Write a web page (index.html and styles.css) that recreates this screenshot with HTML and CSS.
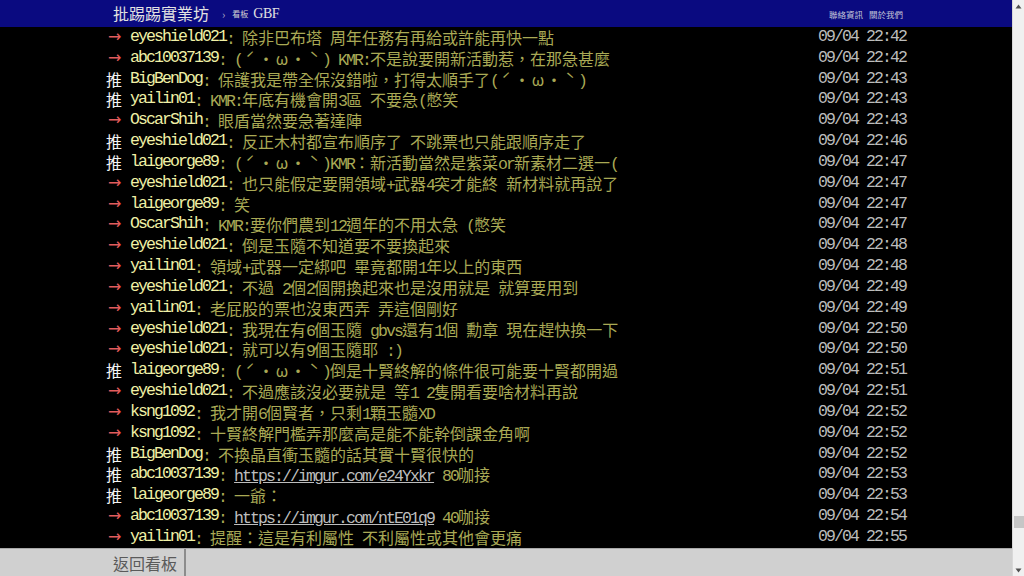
FILE: index.html
```html
<!DOCTYPE html>
<html lang="zh-Hant">
<head>
<meta charset="utf-8">
<title>GBF - 批踢踢實業坊</title>
<link rel="stylesheet" href="styles.css">
</head>
<body>
<div class="page">
  <header class="topbar">
    <div class="topbar-inner">
      <span class="brand">批踢踢實業坊</span>
      <span class="crumb-sep">›</span>
      <span class="crumb-label">看板</span>
      <span class="board">GBF</span>
      <nav class="nav-links"><span>聯絡資訊</span><span>關於我們</span></nav>
    </div>
  </header>
  <main class="comments">
    <div class="comments-inner">
      <div class="push"><span class="tag arrow">→</span><span class="uid">eyeshield021</span><span class="txt"><span class="en">: </span>除非巴布塔<span class="en"> </span>周年任務有再給或許能再快一點</span><span class="time">09/04 22:42</span></div>
      <div class="push"><span class="tag arrow">→</span><span class="uid">abc10037139</span><span class="txt"><span class="en">: (</span><span class="fw">ˊ</span><span class="fw">・</span><span class="fw">ω</span><span class="fw">・</span><span class="fw">ˋ</span><span class="en">) KMR:</span>不是說要開新活動惹，在那急甚麼</span><span class="time">09/04 22:42</span></div>
      <div class="push"><span class="tag good">推</span><span class="uid">BigBenDog</span><span class="txt"><span class="en">: </span>保護我是帶全保沒錯啦，打得太順手了<span class="en">(</span><span class="fw">ˊ</span><span class="fw">・</span><span class="fw">ω</span><span class="fw">・</span><span class="fw">ˋ</span><span class="en">)</span></span><span class="time">09/04 22:43</span></div>
      <div class="push"><span class="tag good">推</span><span class="uid">yailin01</span><span class="txt"><span class="en">: KMR:</span>年底有機會開<span class="en">3</span>區<span class="en"> </span>不要急<span class="en">(</span>憋笑</span><span class="time">09/04 22:43</span></div>
      <div class="push"><span class="tag arrow">→</span><span class="uid">OscarShih</span><span class="txt"><span class="en">: </span>眼盾當然要急著達陣</span><span class="time">09/04 22:43</span></div>
      <div class="push"><span class="tag good">推</span><span class="uid">eyeshield021</span><span class="txt"><span class="en">: </span>反正木村都宣布順序了<span class="en"> </span>不跳票也只能跟順序走了</span><span class="time">09/04 22:46</span></div>
      <div class="push"><span class="tag good">推</span><span class="uid">laigeorge89</span><span class="txt"><span class="en">: (</span><span class="fw">ˊ</span><span class="fw">・</span><span class="fw">ω</span><span class="fw">・</span><span class="fw">ˋ</span><span class="en">)KMR</span>：新活動當然是紫菜<span class="en">or</span>新素材二選一<span class="en">(</span></span><span class="time">09/04 22:47</span></div>
      <div class="push"><span class="tag arrow">→</span><span class="uid">eyeshield021</span><span class="txt"><span class="en">: </span>也只能假定要開領域<span class="en">+</span>武器<span class="en">4</span>突才能終<span class="en"> </span>新材料就再說了</span><span class="time">09/04 22:47</span></div>
      <div class="push"><span class="tag arrow">→</span><span class="uid">laigeorge89</span><span class="txt"><span class="en">: </span>笑</span><span class="time">09/04 22:47</span></div>
      <div class="push"><span class="tag arrow">→</span><span class="uid">OscarShih</span><span class="txt"><span class="en">: KMR:</span>要你們農到<span class="en">12</span>週年的不用太急<span class="en"> (</span>憋笑</span><span class="time">09/04 22:47</span></div>
      <div class="push"><span class="tag arrow">→</span><span class="uid">eyeshield021</span><span class="txt"><span class="en">: </span>倒是玉隨不知道要不要換起來</span><span class="time">09/04 22:48</span></div>
      <div class="push"><span class="tag arrow">→</span><span class="uid">yailin01</span><span class="txt"><span class="en">: </span>領域<span class="en">+</span>武器一定綁吧<span class="en"> </span>畢竟都開<span class="en">1</span>年以上的東西</span><span class="time">09/04 22:48</span></div>
      <div class="push"><span class="tag arrow">→</span><span class="uid">eyeshield021</span><span class="txt"><span class="en">: </span>不過<span class="en"> 2</span>個<span class="en">2</span>個開換起來也是沒用就是<span class="en"> </span>就算要用到</span><span class="time">09/04 22:49</span></div>
      <div class="push"><span class="tag arrow">→</span><span class="uid">yailin01</span><span class="txt"><span class="en">: </span>老屁股的票也沒東西弄<span class="en"> </span>弄這個剛好</span><span class="time">09/04 22:49</span></div>
      <div class="push"><span class="tag arrow">→</span><span class="uid">eyeshield021</span><span class="txt"><span class="en">: </span>我現在有<span class="en">6</span>個玉隨<span class="en"> gbvs</span>還有<span class="en">1</span>個<span class="en"> </span>勳章<span class="en"> </span>現在趕快換一下</span><span class="time">09/04 22:50</span></div>
      <div class="push"><span class="tag arrow">→</span><span class="uid">eyeshield021</span><span class="txt"><span class="en">: </span>就可以有<span class="en">9</span>個玉隨耶<span class="en"> :)</span></span><span class="time">09/04 22:50</span></div>
      <div class="push"><span class="tag good">推</span><span class="uid">laigeorge89</span><span class="txt"><span class="en">: (</span><span class="fw">ˊ</span><span class="fw">・</span><span class="fw">ω</span><span class="fw">・</span><span class="fw">ˋ</span><span class="en">)</span>倒是十賢終解的條件很可能要十賢都開過</span><span class="time">09/04 22:51</span></div>
      <div class="push"><span class="tag arrow">→</span><span class="uid">eyeshield021</span><span class="txt"><span class="en">: </span>不過應該沒必要就是<span class="en"> </span>等<span class="en">1 2</span>隻開看要啥材料再說</span><span class="time">09/04 22:51</span></div>
      <div class="push"><span class="tag arrow">→</span><span class="uid">ksng1092</span><span class="txt"><span class="en">: </span>我才開<span class="en">6</span>個賢者，只剩<span class="en">1</span>顆玉髓<span class="en">XD</span></span><span class="time">09/04 22:52</span></div>
      <div class="push"><span class="tag arrow">→</span><span class="uid">ksng1092</span><span class="txt"><span class="en">: </span>十賢終解門檻弄那麼高是能不能幹倒課金角啊</span><span class="time">09/04 22:52</span></div>
      <div class="push"><span class="tag good">推</span><span class="uid">BigBenDog</span><span class="txt"><span class="en">: </span>不換晶直衝玉髓的話其實十賢很快的</span><span class="time">09/04 22:52</span></div>
      <div class="push"><span class="tag good">推</span><span class="uid">abc10037139</span><span class="txt"><span class="en">: </span><a class="link en" href="#">https://imgur.com/e24Yxkr</a><span class="en"> 80</span>咖接</span><span class="time">09/04 22:53</span></div>
      <div class="push"><span class="tag good">推</span><span class="uid">laigeorge89</span><span class="txt"><span class="en">: </span>一爺：</span><span class="time">09/04 22:53</span></div>
      <div class="push"><span class="tag arrow">→</span><span class="uid">abc10037139</span><span class="txt"><span class="en">: </span><a class="link en" href="#">https://imgur.com/ntE01q9</a><span class="en"> 40</span>咖接</span><span class="time">09/04 22:54</span></div>
      <div class="push"><span class="tag arrow">→</span><span class="uid">yailin01</span><span class="txt"><span class="en">: </span>提醒：這是有利屬性<span class="en"> </span>不利屬性或其他會更痛</span><span class="time">09/04 22:55</span></div>
    </div>
  </main>
  <footer class="footer">
    <div class="footer-inner">
      <a class="back" href="#">返回看板</a>
    </div>
  </footer>
</div>
<aside class="scrollbar">
  <div class="sb-btn"><svg width="7" height="5" viewBox="0 0 7 5"><path d="M3.5 0.5 L6.5 4.5 L0.5 4.5 Z" fill="#505050"/></svg></div>
  <div class="sb-track"><div class="sb-thumb"></div></div>
  <div class="sb-btn"><svg width="7" height="5" viewBox="0 0 7 5"><path d="M0.5 0.5 L6.5 0.5 L3.5 4.5 Z" fill="#505050"/></svg></div>
</aside>
</body>
</html>
```

FILE: styles.css
```css
html, body {
  margin: 0;
  padding: 0;
}
body {
  width: 1024px;
  height: 576px;
  overflow: hidden;
  display: flex;
  background: #000;
  font-family: "Noto Sans CJK TC", "Noto Sans CJK SC", sans-serif;
}
.page {
  flex: 1;
  min-width: 0;
  display: flex;
  flex-direction: column;
}
.topbar {
  flex: none;
  height: 27px;
  background: #0a0a80;
}
.topbar-inner {
  width: 800px;
  height: 100%;
  margin: 0 auto;
  display: flex;
  align-items: center;
}
.brand {
  padding-left: 7px;
  font-size: 16px;
  line-height: 27px;
  color: #e2e2e2;
}
.crumb-sep {
  margin: 0 7px 0 13px;
  font-size: 11px;
  color: #b0b0c8;
}
.crumb-label {
  font-size: 8px;
  color: #d0d0d0;
}
.board {
  margin-left: 5px;
  font-family: "Liberation Serif", serif;
  font-size: 14px;
  color: #e2e2e2;
  letter-spacing: -0.5px;
}
.nav-links {
  margin-left: auto;
  padding-right: 3px;
  display: flex;
  gap: 6px;
  font-size: 8.5px;
  color: #c4c4d8;
}
.comments {
  flex: 1;
  overflow: hidden;
  background: #000;
}
.comments-inner {
  width: 800px;
  margin: 0 auto;
}
.push {
  display: flex;
  height: 20.84px;
  line-height: 20.84px;
  font-size: 16px;
}
.tag {
  flex: none;
  width: 24px;
  font-size: 16px;
}
.tag.good {
  color: #f4f4f4;
}
.tag.arrow {
  box-sizing: border-box;
  padding-left: 2px;
  font-family: "DejaVu Sans", sans-serif;
  font-size: 16px;
  color: #e25c5c;
}
.uid {
  flex: none;
  white-space: pre;
  font-family: "Liberation Mono", monospace;
  font-size: 16.5px;
  letter-spacing: -1.9px;
  color: #f0f0a6;
}
.txt {
  flex: 1;
  white-space: pre;
  color: #a9a955;
}
.en {
  font-family: "Liberation Mono", monospace;
  font-size: 16.5px;
  letter-spacing: -1.9px;
}
.fw {
  display: inline-block;
  width: 16px;
  text-align: center;
}
.link {
  color: #bdbdbd;
  text-decoration: underline;
}
.time {
  flex: none;
  white-space: pre;
  font-family: "Liberation Mono", monospace;
  font-size: 16.5px;
  letter-spacing: -1.9px;
  color: #bcbcbc;
}
.footer {
  flex: none;
  height: 28px;
  box-sizing: border-box;
  background: #d0d0d0;
  border-top: 1px solid #a9a9a9;
}
.footer-inner {
  width: 800px;
  height: 100%;
  margin: 0 auto;
  display: flex;
}
.back {
  display: flex;
  align-items: center;
  padding: 0 7px;
  border-right: 2px solid #8c8c8c;
  font-size: 16px;
  color: #5a5a5a;
  text-decoration: none;
}
.scrollbar {
  flex: none;
  width: 12px;
  box-sizing: border-box;
  border-left: 1px solid #d8d8d8;
  background: #f0f0f0;
  display: flex;
  flex-direction: column;
}
.sb-btn {
  height: 12px;
  display: flex;
  align-items: center;
  justify-content: center;
}
.sb-track {
  flex: 1;
  display: flex;
  flex-direction: column;
  justify-content: flex-end;
  align-items: center;
  padding-bottom: 36px;
}
.sb-thumb {
  width: 10px;
  height: 12px;
  background: #c6c6c6;
}
```
